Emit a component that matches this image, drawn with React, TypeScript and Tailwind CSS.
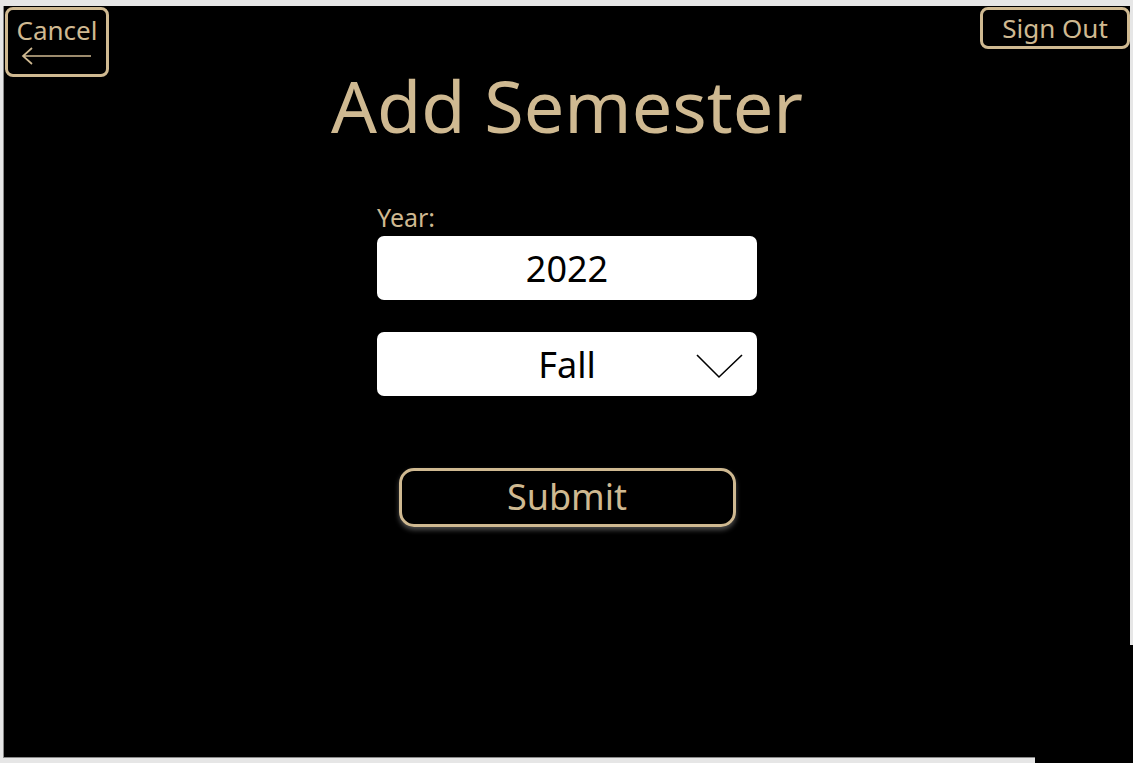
import { useState } from 'react';

const gold = 'text-[#cfb991]';

const App = () => {
  const [year, setYear] = useState('2022');
  const [term] = useState('Fall');

  return (
    <div className="relative w-full h-screen bg-[#e6e6e6] font-['Noto_Sans',sans-serif] overflow-hidden">
      <div className="ml-[3px] mt-[6px] w-[1127px] h-[752px] bg-black border-l border-b border-[#8a8a8a] flex flex-col items-center">
        <div className="w-full flex justify-between items-start pt-[1px] pl-[1px]">
          <button className={`w-[104px] h-[70px] border-[3px] border-[#cfb991] rounded-[8px] flex flex-col items-center pt-[7px] ${gold}`}>
            <span className="text-[26px] leading-none">Cancel</span>
            <svg width="72" height="20" viewBox="0 0 72 20" className="mt-[3px]">
              <path d="M2 10 H70 M11 2 L2 10 L11 18" fill="none" stroke="#cfb991" strokeWidth="1.7" />
            </svg>
          </button>
          <button className={`w-[150px] h-[42px] border-[3px] border-[#cfb991] rounded-[8px] text-[26px] leading-none ${gold}`}>
            Sign Out
          </button>
        </div>

        <h1 className={`-mt-[8px] text-[72px] leading-none ${gold}`}>Add Semester</h1>

        <div className="mt-[64px] w-[380px] flex flex-col">
          <label className={`text-[25px] leading-none ${gold}`}>Year:</label>
          <input
            value={year}
            onChange={(e) => setYear(e.target.value)}
            className="mt-[6px] h-[64px] w-full rounded-[7px] bg-white text-black text-center text-[36px] outline-none"
          />
          <div className="relative mt-[32px] h-[64px] w-full rounded-[7px] bg-white text-black text-[36px] flex items-center justify-center">
            <span className="leading-none pt-[2px]">{term}</span>
            <svg width="48" height="26" viewBox="0 0 48 26" className="absolute right-[13px] top-[22px]">
              <path d="M1 1 L23 23 L46 1" fill="none" stroke="#000" strokeWidth="1.6" />
            </svg>
          </div>
        </div>

        <button
          className={`mt-[72px] w-[337px] h-[59px] border-[3px] border-[#cfb991] rounded-[15px] text-[36px] leading-none pb-[2px] shadow-[0_3px_5px_rgba(255,255,255,0.3)] ${gold}`}
        >
          Submit
        </button>
      </div>
      <div className="absolute left-[1035px] top-[645px] w-[98px] h-[118px] bg-black" />
    </div>
  );
};

export default App;
